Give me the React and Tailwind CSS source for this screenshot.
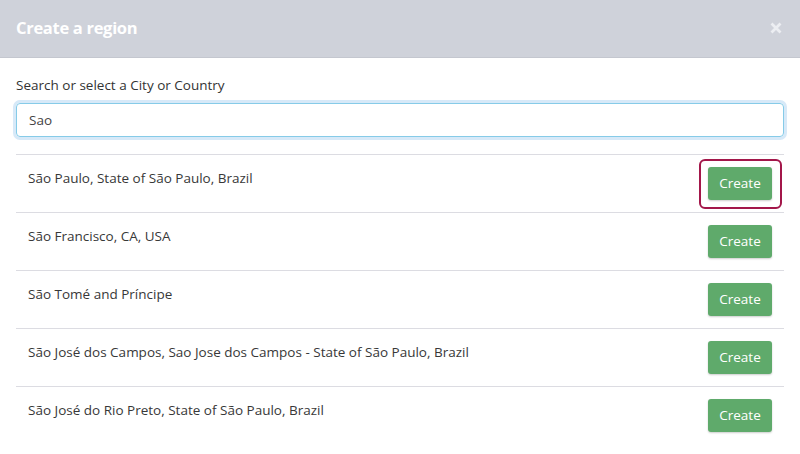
import React from "react";

const rows = [
  "São Paulo, State of São Paulo, Brazil",
  "São Francisco, CA, USA",
  "São Tomé and Príncipe",
  "São José dos Campos, Sao Jose dos Campos - State of São Paulo, Brazil",
  "São José do Rio Preto, State of São Paulo, Brazil",
];

export default function App() {
  return (
    <div
      className="w-[800px] h-[454px] bg-white overflow-hidden text-[#333]"
      style={{ fontFamily: '"Open Sans", "Noto Sans", sans-serif' }}
    >
      <div className="h-[58px] bg-[#cfd2da] border-b border-[#c4c7cf] flex items-center justify-between pl-4 pr-[18px]">
        <h1 className="text-[16.5px] font-bold text-white tracking-[-0.3px]">Create a region</h1>
        <svg width="12" height="12" viewBox="0 0 12 12" className="mt-[-2px]">
          <path d="M1.5 1.5 L10.5 10.5 M10.5 1.5 L1.5 10.5" stroke="#eceef2" strokeWidth="2.8" strokeLinecap="butt" />
        </svg>
      </div>
      <div className="px-4 pt-[18px]">
        <label className="block text-[13.5px] leading-[18px] text-[#333]">
          Search or select a City or Country
        </label>
        <div className="mt-[9px] rounded-[4px] ring-[3px] ring-[#d7e9f8]">
          <input
            defaultValue="Sao"
            className="block w-full h-[34px] rounded-[4px] border border-[#86cbe8] px-3 text-[13.5px] text-[#444] outline-none bg-white"
            style={{ fontFamily: '"Open Sans", "Noto Sans", sans-serif' }}
          />
        </div>
        <div className="mt-[17px]">
          {rows.map((r, i) => (
            <div
              key={i}
              className="h-[58px] border-t border-[#dcdce2] flex items-start justify-between pl-3 pr-3"
            >
              <span className="text-[13.5px] leading-[18px] mt-[14px] text-[#383838]">{r}</span>
              <div className="relative mt-[12px]">
                {i === 0 && (
                  <div className="absolute left-[-9px] top-[-8px] w-[83px] h-[50px] border-2 border-[#a3174a] rounded-[6px]" />
                )}
                <button className="relative w-[64px] h-[33px] rounded-[3px] bg-[#5faa6b] text-white text-[13.5px] shadow-[0_1px_2px_rgba(0,0,0,0.2)]">
                  Create
                </button>
              </div>
            </div>
          ))}
        </div>
      </div>
    </div>
  );
}
